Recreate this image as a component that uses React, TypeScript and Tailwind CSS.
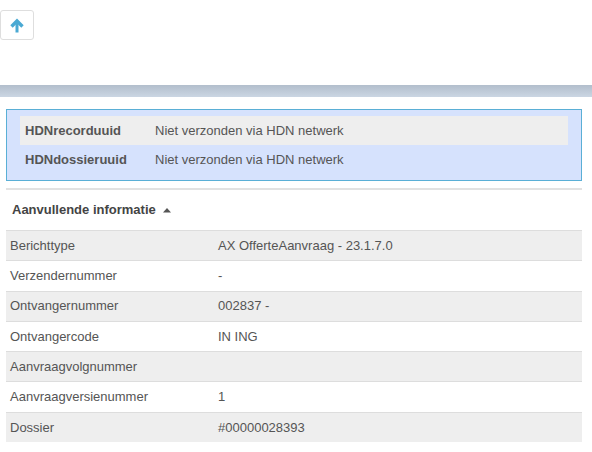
import React from "react";

const hdnRows = [
  { label: "HDNrecorduuid", value: "Niet verzonden via HDN netwerk" },
  { label: "HDNdossieruuid", value: "Niet verzonden via HDN netwerk" },
];

const infoRows = [
  { label: "Berichttype", value: "AX OfferteAanvraag - 23.1.7.0" },
  { label: "Verzendernummer", value: "-" },
  { label: "Ontvangernummer", value: "002837 -" },
  { label: "Ontvangercode", value: "IN ING" },
  { label: "Aanvraagvolgnummer", value: "" },
  { label: "Aanvraagversienummer", value: "1" },
  { label: "Dossier", value: "#00000028393" },
];

function ArrowUpIcon() {
  return (
    <svg width="16" height="15" viewBox="0 0 16 15" fill="none">
      <path d="M2.5 8.5 L8 3 L13.5 8.5" stroke="#4aa9d3" strokeWidth="3.4" strokeLinejoin="miter" strokeLinecap="butt" />
      <path d="M8 3.5 V14.5" stroke="#4aa9d3" strokeWidth="3" />
    </svg>
  );
}

export default function App() {
  return (
    <div className="min-h-[452px] bg-white text-[13px] text-[#555]" style={{ fontFamily: '"Liberation Sans", Arial, sans-serif' }}>
      <div className="h-[10px]" />
      <button
        type="button"
        className="flex h-[30px] w-[34px] items-center justify-center rounded-[3px] border border-[#dedede] bg-white"
      >
        <ArrowUpIcon />
      </button>

      <div className="mt-[45px] h-[12px] bg-gradient-to-b from-[#b2becc] to-[#cbd6e3]" />

      <div className="pl-[6px] pr-[10px]">
        <div className="mt-[12px] border border-[#5aafd6] bg-[#d6e2fd] px-[13px] py-[6px]">
          {hdnRows.map((row, i) => (
            <div key={row.label} className={`flex h-[29px] items-center ${i % 2 === 0 ? "bg-[#eeeeee]" : ""}`}>
              <div className="w-[135px] pl-[5px] font-bold text-[#555]">{row.label}</div>
              <div>{row.value}</div>
            </div>
          ))}
        </div>

        <div className="mt-[7px] h-[2px] bg-[#e2e2e2]" />

        <div className="flex h-[40px] items-center gap-[6px] pl-[6px] font-bold text-[#444]">
          <span>Aanvullende informatie</span>
          <svg width="10" height="8" viewBox="0 0 10 8" className="mb-[1px]">
            <path d="M1 6.5 L5 2 L9 6.5 Z" fill="#555" />
          </svg>
        </div>

        <div>
          {infoRows.map((row, i) => (
            <div
              key={row.label}
              className={`flex h-[30.3px] items-center border-t border-[#dddddd] ${i % 2 === 0 ? "bg-[#eeeeee]" : "bg-white"}`}
            >
              <div className="w-[212px] pl-[4px]">{row.label}</div>
              <div>{row.value}</div>
            </div>
          ))}
        </div>
      </div>
    </div>
  );
}
